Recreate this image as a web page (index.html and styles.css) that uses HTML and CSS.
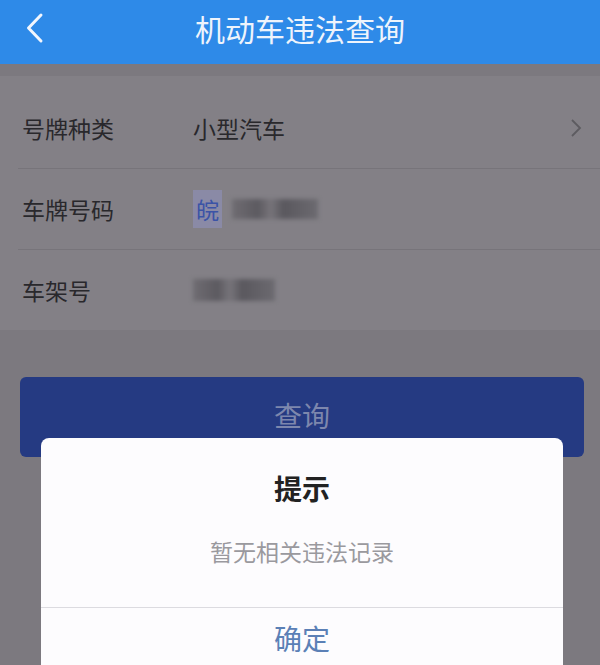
FILE: index.html
```html
<!DOCTYPE html>
<html lang="zh-CN">
<head>
  <meta charset="UTF-8" />
  <meta name="viewport" content="width=device-width, initial-scale=1.0" />
  <title>机动车违法查询</title>
  <link rel="stylesheet" href="styles.css">
</head>
<body>
  <!-- Top bar -->
  <div class="header">
    <span class="back">
      <svg width="20" height="32" viewBox="0 0 20 32"><path d="M16 3 L3.5 16 L16 29" fill="none" stroke="#f2f6fd" stroke-width="3" stroke-linecap="round" stroke-linejoin="round"/></svg>
    </span>
    <h1>机动车违法查询</h1>
  </div>

  <!-- Query form (dimmed behind the dialog) -->
  <div class="form">
    <div class="row">
      <span class="label">号牌种类</span>
      <span class="value">小型汽车</span>
      <svg class="arrow" width="12" height="20" viewBox="0 0 12 20"><path d="M2 2 L10 10 L2 18" fill="none" stroke="#5d5b60" stroke-width="1.8"/></svg>
    </div>
    <div class="row">
      <span class="label">车牌号码</span>
      <span class="value"><span class="prov">皖</span><span class="blur plate"></span></span>
    </div>
    <div class="row">
      <span class="label">车架号</span>
      <span class="value"><span class="blur vin"></span></span>
    </div>
  </div>

  <div class="actions">
    <button class="btn">查询</button>
  </div>

  <!-- Alert dialog -->
  <div class="dialog">
    <h2>提示</h2>
    <p>暂无相关违法记录</p>
    <div class="dialog-btn">确定</div>
  </div>
</body>
</html>
```

FILE: styles.css
```css
body {
  margin: 0;
  width: 600px;
  height: 665px;
  overflow: hidden;
  background-color: #7c797f;
  font-family: "Noto Sans CJK SC", "Noto Sans", sans-serif;
  position: relative;
}
.header {
  height: 64px;
  background-color: #2e8ae8;
  display: flex;
  align-items: center;
  justify-content: center;
  position: relative;
}
.header h1 {
  margin: 0;
  font-size: 30px;
  font-weight: normal;
  color: #eef4fc;
  line-height: 40px;
  margin-top: -8px;
}
.back {
  position: absolute;
  left: 25px;
  top: 12px;
}
.form {
  background-color: #838086;
  margin-top: 12px;
  padding-top: 12px;
}
.row {
  height: 80px;
  display: flex;
  align-items: center;
  border-bottom: 1px solid #77747a;
  margin-left: 18px;
  padding-left: 4px;
}
.row:last-child {
  border-bottom: none;
}
.label {
  width: 171px;
  font-size: 23px;
  color: #29282c;
}
.value {
  flex: 1;
  font-size: 23px;
  color: #29282c;
  display: flex;
  align-items: center;
}
.arrow {
  margin-right: 18px;
}
.prov {
  background-color: #8a8aa6;
  color: #3b53a6;
  padding: 2px 3px;
  margin-right: 10px;
}
.blur {
  display: inline-block;
  background: linear-gradient(90deg, #6f6c72, #5c5a60 30%, #77747a 45%, #5a585e 60%, #6c6a70);
  filter: blur(2px);
}
.plate {
  width: 86px;
  height: 20px;
}
.vin {
  width: 82px;
  height: 22px;
}
.actions {
  padding: 47px 16px 0 20px;
}
.btn {
  width: 100%;
  height: 80px;
  border: none;
  border-radius: 6px;
  background-color: #253a82;
  color: #7d87ad;
  font-family: inherit;
  font-size: 28px;
  padding-bottom: 6px;
}
.dialog {
  position: absolute;
  left: 41px;
  top: 438px;
  width: 522px;
  height: 260px;
  background-color: #fdfcfe;
  border-radius: 8px;
  text-align: center;
}
.dialog h2 {
  margin: 30px 0 0;
  font-size: 28px;
  line-height: 40px;
  color: #222;
}
.dialog p {
  margin: 26px 0 0;
  font-size: 23px;
  line-height: 34px;
  color: #9a999e;
  padding-bottom: 39px;
  border-bottom: 1px solid #dcdbe0;
}
.dialog-btn {
  height: 64px;
  line-height: 60px;
  font-size: 28px;
  color: #5b80b6;
}
```
